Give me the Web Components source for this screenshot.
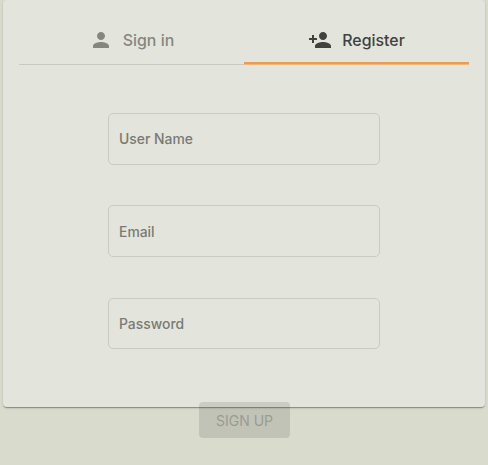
<!DOCTYPE html>
<html lang="en">
<head>
<meta charset="utf-8">
<title>Register</title>
<style>
html, body { margin: 0; height: 100%; }
body { background: #d9dbcd; font-family: Inter, "Liberation Sans", sans-serif; overflow: hidden; }
</style>
</head>
<body>
<auth-card>
  <tab-bar slot="tabs">
    <tab-item icon="person">Sign in</tab-item>
    <tab-item icon="person-add" active>Register</tab-item>
  </tab-bar>
  <text-field>User Name</text-field>
  <text-field>Email</text-field>
  <text-field>Password</text-field>
  <submit-button slot="action">SIGN UP</submit-button>
</auth-card>
<script>
class BaseElement extends HTMLElement {
  constructor() {
    super();
    this.attachShadow({ mode: 'open' }).innerHTML = this.constructor.markup;
  }
}

class AuthCard extends BaseElement {
  static markup = `<style>
    :host { display: block; box-sizing: border-box; height: 407px; margin: 0 3px; padding: 16px 16px 0;
      border-radius: 4px; background: #e3e5dc;
      box-shadow: 0 2px 1px -1px rgba(0,0,0,.2), 0 1px 1px rgba(0,0,0,.14), 0 1px 3px rgba(0,0,0,.12); }
    .fields { display: flex; flex-direction: column; align-items: center; gap: 40.8px; padding-top: 48px; }
    .action { display: flex; justify-content: center; padding: 52.6px 0 0 1px; }
  </style><slot name="tabs"></slot><div class="fields"><slot></slot></div><div class="action"><slot name="action"></slot></div>`;
}

class TabBar extends BaseElement {
  static markup = `<style>
    :host { display: grid; grid-template-columns: 1fr 1fr; height: 49px; box-sizing: border-box;
      box-shadow: inset 0 -1px #c9cbc3; }
  </style><slot></slot>`;
}

class TabItem extends BaseElement {
  static markup = `<style>
    :host { display: flex; box-sizing: border-box; height: 48px; align-items: center; justify-content: center; gap: 10px;
      font-size: 15.9px; font-weight: 500; color: #85867f; }
    :host([active]) { color: #41423e; box-shadow: inset 0 -2px #eb9c50, 0 1px #f0b781; }
    svg { width: 24px; height: 24px; fill: currentColor; flex: none; }
    :host([active]) svg { margin: 0 .5px 0 -.5px; }
  </style><svg viewBox="0 0 24 24" aria-hidden="true"><path/></svg><span><slot></slot></span>`;
  connectedCallback() {
    const paths = {
      'person': 'M12 12c2.21 0 4-1.79 4-4s-1.79-4-4-4-4 1.79-4 4 1.79 4 4 4zm0 2c-2.67 0-8 1.34-8 4v2h16v-2c0-2.66-5.33-4-8-4z',
      'person-add': 'M15 12c2.21 0 4-1.79 4-4s-1.79-4-4-4-4 1.79-4 4 1.79 4 4 4zm-9-2V7H4v3H1v2h3v3h2v-3h3v-2H6zm9 4c-2.67 0-8 1.34-8 4v2h16v-2c0-2.66-5.33-4-8-4z'
    };
    this.shadowRoot.querySelector('path').setAttribute('d', paths[this.getAttribute('icon')]);
  }
}

class TextField extends BaseElement {
  static markup = `<style>
    :host { display: flex; align-items: center; box-sizing: border-box; width: 272px; height: 51.6px; padding: 1.8px 0 0 10px;
      border: 1px solid #caccc3; border-radius: 5px; font-size: 13.9px; line-height: 17px; font-weight: 500; color: #797a74; }
  </style><label><slot></slot></label>`;
}

class SubmitButton extends BaseElement {
  static markup = `<style>
    :host { display: flex; }
    button { width: 91px; height: 36px; padding: 2px 0 0; border: 0; border-radius: 4px; background: rgba(0,0,0,.105);
      color: #9a9c91; font: 400 14px Inter, "Liberation Sans", sans-serif; }
  </style><button type="button" disabled><slot></slot></button>`;
}

customElements.define('auth-card', AuthCard);
customElements.define('tab-bar', TabBar);
customElements.define('tab-item', TabItem);
customElements.define('text-field', TextField);
customElements.define('submit-button', SubmitButton);
</script>
</body>
</html>
